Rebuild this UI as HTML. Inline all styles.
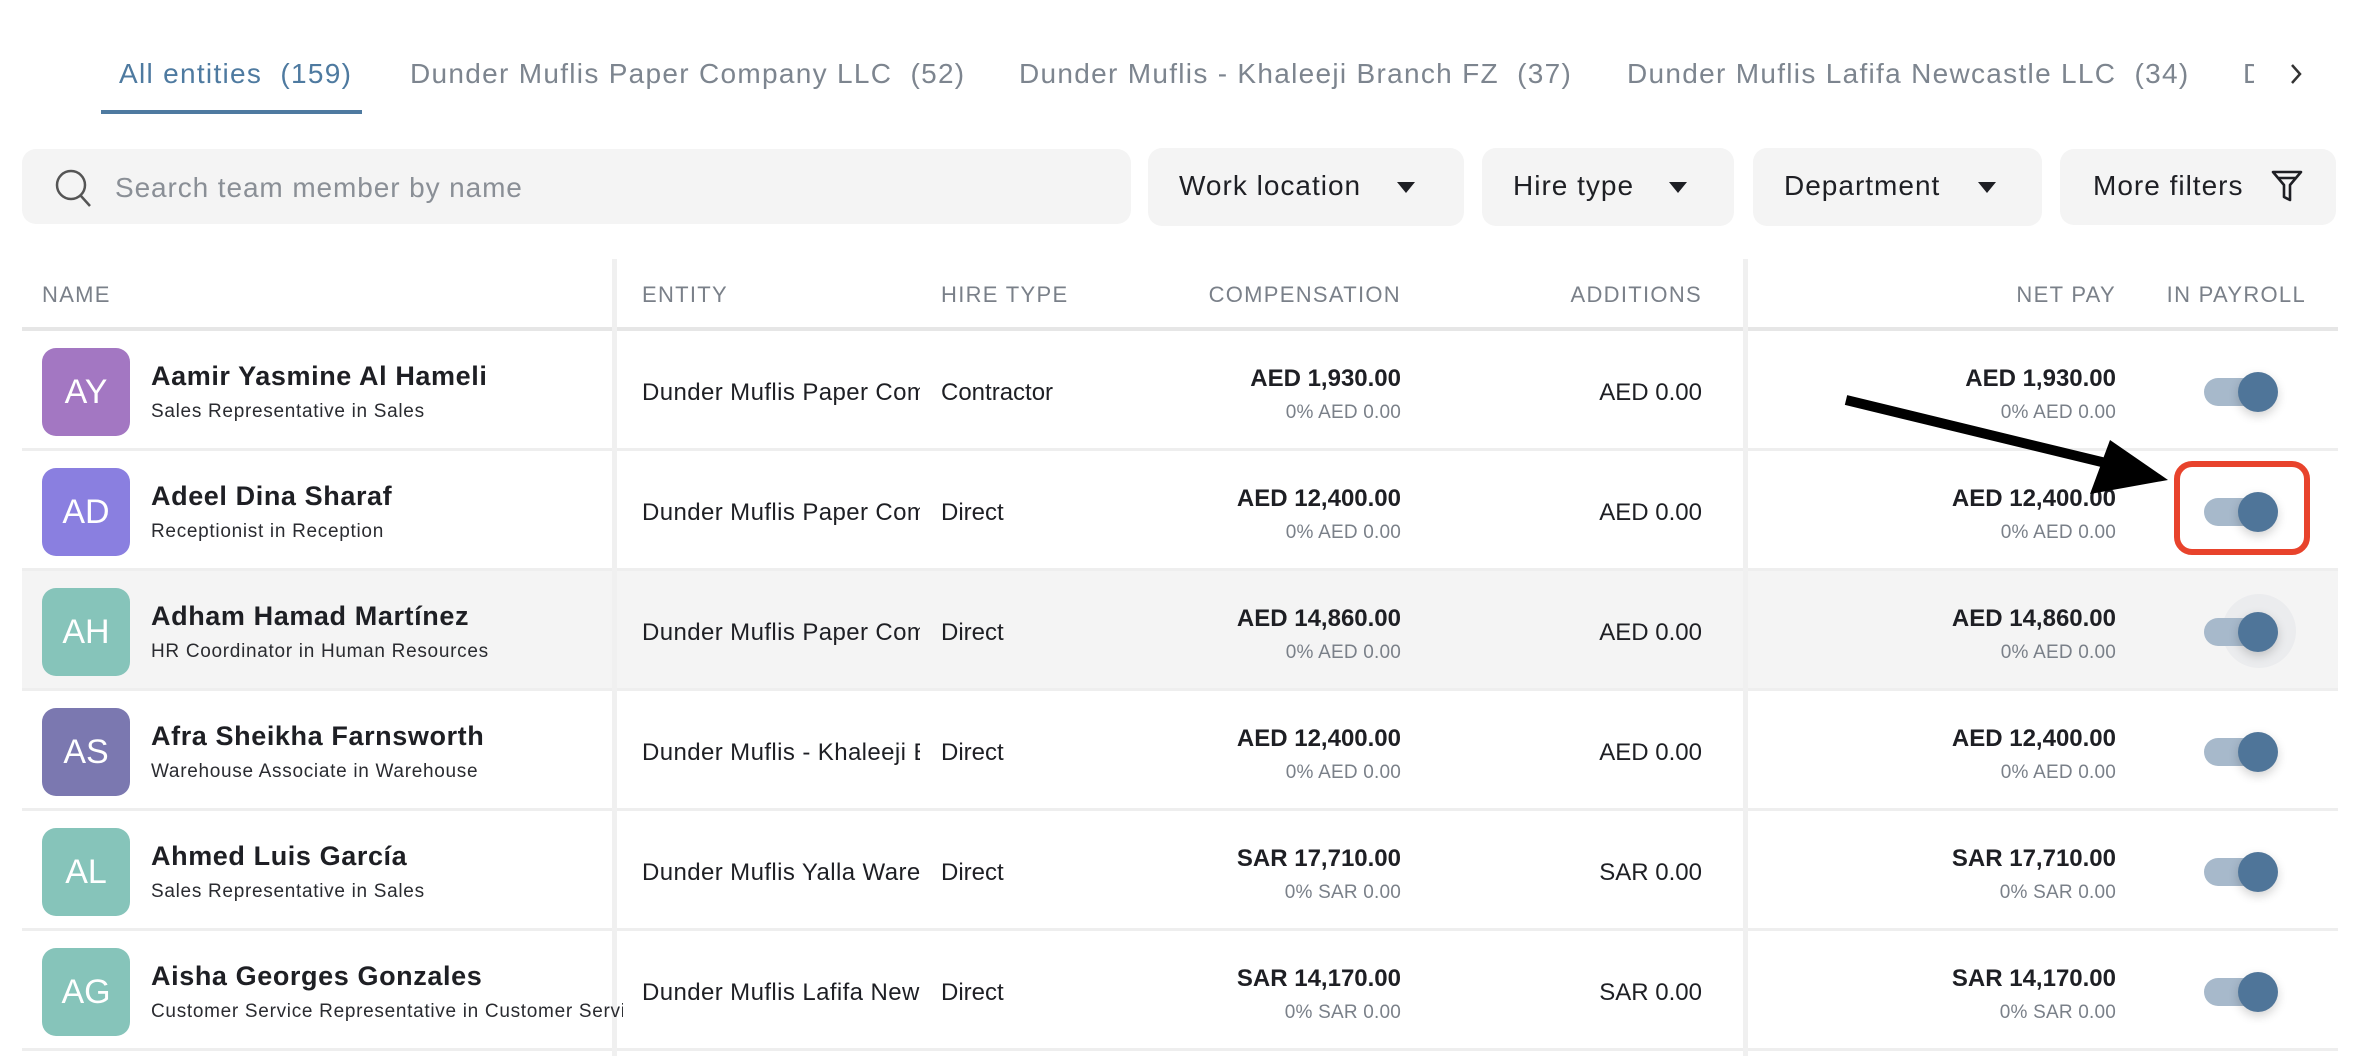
<!DOCTYPE html>
<html><head><meta charset="utf-8"><style>
*{margin:0;padding:0;box-sizing:border-box}
body{width:2362px;height:1056px;background:#fff;font-family:"Liberation Sans",sans-serif;position:relative;overflow:hidden;color:#1e1f24}
.a{position:absolute;white-space:nowrap}
.tab{font-size:28px;color:#7d858f;top:58px;letter-spacing:1.3px}
.box{position:absolute;background:#f4f4f4;border-radius:14px;top:148px;height:78px}
.flt{font-size:28px;color:#1e1f24;top:170px;letter-spacing:1px}
.tri{position:absolute;width:0;height:0;border-left:9px solid transparent;border-right:9px solid transparent;border-top:11px solid #1e1f24;top:182px}
.hd{font-size:22px;color:#7a8089;top:282px;letter-spacing:1.3px}
.row{position:absolute;left:22px;width:2316px;height:120px;border-bottom:3px solid #eeeeee}
.av{position:absolute;left:42px;width:88px;height:88px;border-radius:14px;color:#fff;font-size:34px;text-align:center;line-height:88px}
.nm{font-size:27px;font-weight:bold;left:151px;color:#1e1f24;letter-spacing:.6px}
.sb{font-size:19px;left:151px;color:#2a2b30;letter-spacing:.7px}
.tx{font-size:24px}
.ent{width:278px;overflow:hidden;letter-spacing:.4px}
.r{text-align:right}
.b{font-weight:bold}
.sm{font-size:19px;color:#7a8089;letter-spacing:.2px}
.trk{position:absolute;left:2204px;width:66px;height:28px;border-radius:14px;background:#a7b9cb}
.kn{position:absolute;left:2238px;width:40px;height:40px;border-radius:50%;background:#4f7599;box-shadow:0 4px 10px rgba(0,0,0,.18)}
</style></head><body>
<div class="a tab" style="left:119px;color:#4e7aa0">All entities&nbsp; (159)</div>
<div style="position:absolute;left:101px;top:110px;width:261px;height:4px;background:#4e7aa0"></div>
<div class="a tab" style="left:410px">Dunder Muflis Paper Company LLC&nbsp; (52)</div>
<div class="a tab" style="left:1019px">Dunder Muflis - Khaleeji Branch FZ&nbsp; (37)</div>
<div class="a tab" style="left:1627px">Dunder Muflis Lafifa Newcastle LLC&nbsp; (34)</div>
<div class="a tab" style="left:2243px">D</div>
<div style="position:absolute;left:2254px;top:40px;width:60px;height:60px;background:#fff"></div>
<svg class="a" style="left:2288px;top:62px" width="16" height="24"><path d="M4 3 L12 12 L4 21" stroke="#333" stroke-width="2.5" fill="none"/></svg>

<div class="box" style="left:22px;width:1109px;top:149px;height:75px"></div>
<svg class="a" style="left:54px;top:168px" width="40" height="42"><circle cx="17" cy="17" r="14" stroke="#555" stroke-width="2.5" fill="none"/><path d="M27 28 L36 38" stroke="#555" stroke-width="2.5"/></svg>
<div class="a" style="left:115px;top:172px;font-size:28px;color:#8a8f96;letter-spacing:.9px">Search team member by name</div>

<div class="box" style="left:1148px;width:316px"></div>
<div class="a flt" style="left:1179px">Work location</div><div class="tri" style="left:1397px"></div>
<div class="box" style="left:1482px;width:252px"></div>
<div class="a flt" style="left:1513px">Hire type</div><div class="tri" style="left:1669px"></div>
<div class="box" style="left:1753px;width:289px"></div>
<div class="a flt" style="left:1784px">Department</div><div class="tri" style="left:1978px"></div>
<div class="box" style="left:2060px;width:276px;top:149px;height:76px"></div>
<div class="a flt" style="left:2093px">More filters</div>
<svg class="a" style="left:2270px;top:168px" width="34" height="36"><path d="M3 4 H31 L20 17 V32 L14 29 V17 Z M8 10 H26" stroke="#1e1f24" stroke-width="2.6" fill="none" stroke-linejoin="round"/></svg>

<div class="a hd" style="left:42px">NAME</div>
<div class="a hd" style="left:642px">ENTITY</div>
<div class="a hd" style="left:941px">HIRE TYPE</div>
<div class="a hd r" style="right:961px">COMPENSATION</div>
<div class="a hd r" style="right:660px">ADDITIONS</div>
<div class="a hd r" style="right:246px">NET PAY</div>
<div class="a hd r" style="right:56px">IN PAYROLL</div>
<div style="position:absolute;left:22px;top:327px;width:2316px;height:4px;background:#e6e6e6"></div>

<div class="row" style="top:331px"></div>
<div class="row" style="top:451px"></div>
<div class="row" style="top:571px;background:#f4f4f4"></div>
<div class="row" style="top:691px"></div>
<div class="row" style="top:811px"></div>
<div class="row" style="top:931px"></div>
<div style="position:absolute;left:612px;top:259px;width:5px;height:797px;background:#f0f0f0"></div>
<div style="position:absolute;left:1743px;top:259px;width:5px;height:797px;background:#f0f0f0"></div>

<div class="av" style="top:348px;background:#a377c2">AY</div>
<div class="a nm" style="top:361px">Aamir Yasmine Al Hameli</div><div class="a sb" style="top:401px">Sales Representative in Sales</div>
<div class="a tx ent" style="left:642px;top:379px">Dunder Muflis Paper Company LLC</div><div class="a tx" style="left:941px;top:379px">Contractor</div>
<div class="a tx b r" style="right:961px;top:365px">AED 1,930.00</div><div class="a sm r" style="right:961px;top:402px">0% AED 0.00</div>
<div class="a tx r" style="right:660px;top:379px">AED 0.00</div>
<div class="a tx b r" style="right:246px;top:365px">AED 1,930.00</div><div class="a sm r" style="right:246px;top:402px">0% AED 0.00</div>
<div class="trk" style="top:378px"></div><div class="kn" style="top:372px"></div>

<div class="av" style="top:468px;background:#8a7fe0">AD</div>
<div class="a nm" style="top:481px">Adeel Dina Sharaf</div><div class="a sb" style="top:521px">Receptionist in Reception</div>
<div class="a tx ent" style="left:642px;top:499px">Dunder Muflis Paper Company LLC</div><div class="a tx" style="left:941px;top:499px">Direct</div>
<div class="a tx b r" style="right:961px;top:485px">AED 12,400.00</div><div class="a sm r" style="right:961px;top:522px">0% AED 0.00</div>
<div class="a tx r" style="right:660px;top:499px">AED 0.00</div>
<div class="a tx b r" style="right:246px;top:485px">AED 12,400.00</div><div class="a sm r" style="right:246px;top:522px">0% AED 0.00</div>
<div class="trk" style="top:498px"></div><div class="kn" style="top:492px"></div>

<div class="av" style="top:588px;background:#86c4ba">AH</div>
<div class="a nm" style="top:601px">Adham Hamad Martínez</div><div class="a sb" style="top:641px">HR Coordinator in Human Resources</div>
<div class="a tx ent" style="left:642px;top:619px">Dunder Muflis Paper Company LLC</div><div class="a tx" style="left:941px;top:619px">Direct</div>
<div class="a tx b r" style="right:961px;top:605px">AED 14,860.00</div><div class="a sm r" style="right:961px;top:642px">0% AED 0.00</div>
<div class="a tx r" style="right:660px;top:619px">AED 0.00</div>
<div class="a tx b r" style="right:246px;top:605px">AED 14,860.00</div><div class="a sm r" style="right:246px;top:642px">0% AED 0.00</div>
<div style="position:absolute;left:2222px;top:594px;width:74px;height:74px;border-radius:50%;background:#ebecee"></div>
<div class="trk" style="top:618px"></div><div class="kn" style="top:612px"></div>

<div class="av" style="top:708px;background:#7b78b0">AS</div>
<div class="a nm" style="top:721px">Afra Sheikha Farnsworth</div><div class="a sb" style="top:761px">Warehouse Associate in Warehouse</div>
<div class="a tx ent" style="left:642px;top:739px">Dunder Muflis - Khaleeji Branch FZ</div><div class="a tx" style="left:941px;top:739px">Direct</div>
<div class="a tx b r" style="right:961px;top:725px">AED 12,400.00</div><div class="a sm r" style="right:961px;top:762px">0% AED 0.00</div>
<div class="a tx r" style="right:660px;top:739px">AED 0.00</div>
<div class="a tx b r" style="right:246px;top:725px">AED 12,400.00</div><div class="a sm r" style="right:246px;top:762px">0% AED 0.00</div>
<div class="trk" style="top:738px"></div><div class="kn" style="top:732px"></div>

<div class="av" style="top:828px;background:#86c4ba">AL</div>
<div class="a nm" style="top:841px">Ahmed Luis García</div><div class="a sb" style="top:881px">Sales Representative in Sales</div>
<div class="a tx ent" style="left:642px;top:859px">Dunder Muflis Yalla Warehouse</div><div class="a tx" style="left:941px;top:859px">Direct</div>
<div class="a tx b r" style="right:961px;top:845px">SAR 17,710.00</div><div class="a sm r" style="right:961px;top:882px">0% SAR 0.00</div>
<div class="a tx r" style="right:660px;top:859px">SAR 0.00</div>
<div class="a tx b r" style="right:246px;top:845px">SAR 17,710.00</div><div class="a sm r" style="right:246px;top:882px">0% SAR 0.00</div>
<div class="trk" style="top:858px"></div><div class="kn" style="top:852px"></div>

<div class="av" style="top:948px;background:#86c4ba">AG</div>
<div class="a nm" style="top:961px">Aisha Georges Gonzales</div><div class="a sb" style="top:1001px;width:472px;overflow:hidden">Customer Service Representative in Customer Service</div>
<div class="a tx ent" style="left:642px;top:979px">Dunder Muflis Lafifa Newcastle</div><div class="a tx" style="left:941px;top:979px">Direct</div>
<div class="a tx b r" style="right:961px;top:965px">SAR 14,170.00</div><div class="a sm r" style="right:961px;top:1002px">0% SAR 0.00</div>
<div class="a tx r" style="right:660px;top:979px">SAR 0.00</div>
<div class="a tx b r" style="right:246px;top:965px">SAR 14,170.00</div><div class="a sm r" style="right:246px;top:1002px">0% SAR 0.00</div>
<div class="trk" style="top:978px"></div><div class="kn" style="top:972px"></div>

<div style="position:absolute;left:2174px;top:461px;width:136px;height:94px;border:6px solid #e8432c;border-radius:18px"></div>
<svg class="a" style="left:0;top:0" width="2362" height="1056"><line x1="1846" y1="400" x2="2110" y2="464" stroke="#000" stroke-width="10"/><polygon points="2168,480 2090,494 2110,440" fill="#000"/></svg>
</body></html>
